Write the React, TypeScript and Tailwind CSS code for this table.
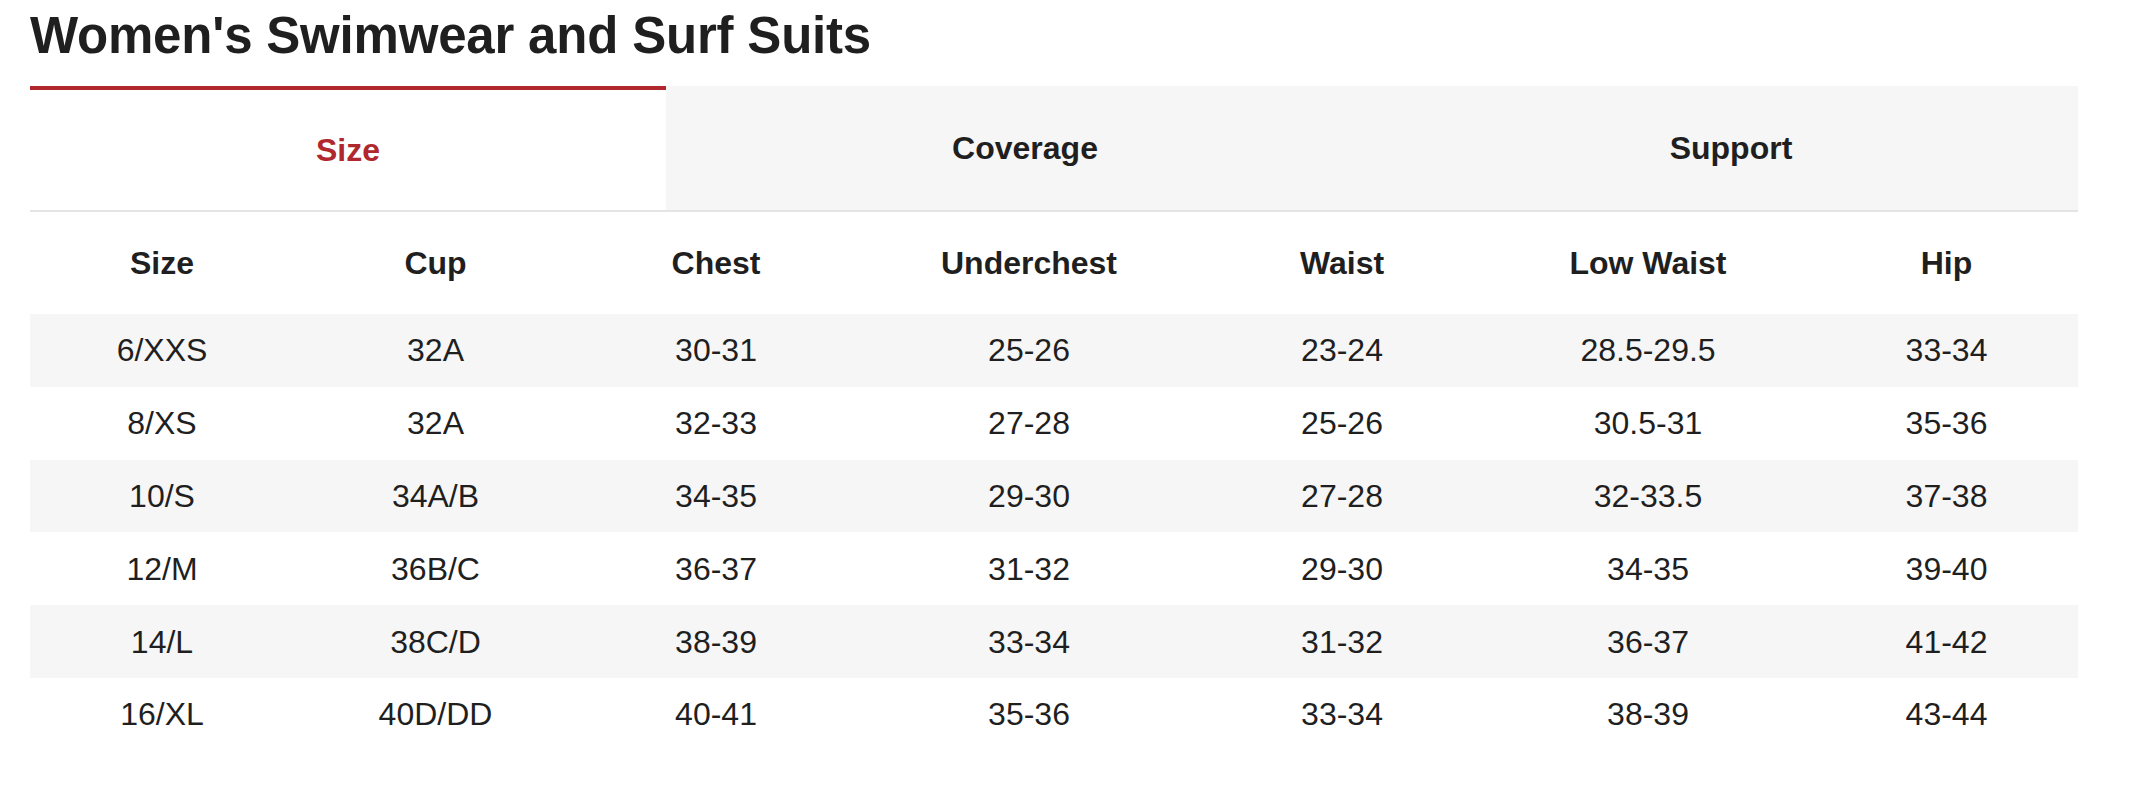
const tabs = [
  { label: "Size", width: "w-[636px]", active: true },
  { label: "Coverage", width: "w-[718px]", active: false },
  { label: "Support", width: "w-[694px]", active: false },
];

const columns = ["Size", "Cup", "Chest", "Underchest", "Waist", "Low Waist", "Hip"];

const rows = [
  ["6/XXS", "32A", "30-31", "25-26", "23-24", "28.5-29.5", "33-34"],
  ["8/XS", "32A", "32-33", "27-28", "25-26", "30.5-31", "35-36"],
  ["10/S", "34A/B", "34-35", "29-30", "27-28", "32-33.5", "37-38"],
  ["12/M", "36B/C", "36-37", "31-32", "29-30", "34-35", "39-40"],
  ["14/L", "38C/D", "38-39", "33-34", "31-32", "36-37", "41-42"],
  ["16/XL", "40D/DD", "40-41", "35-36", "33-34", "38-39", "43-44"],
];

const gridCols = "grid grid-cols-[264px_283px_278px_348px_278px_334px_263px]";

export default function App() {
  return (
    <div className="min-h-[796px] w-[2154px] bg-white font-['Liberation_Sans',Arial,sans-serif] text-[#1f1f1f]">
      <div className="ml-[30px] w-[2048px] pt-[10px]">
        <h1 className="text-[51px] font-bold leading-none tracking-[-0.2px]">
          Women's Swimwear and Surf Suits
        </h1>

        {/* Tabs */}
        <div className="mt-[25px] flex border-b-2 border-[#e4e4e4]">
          {tabs.map((tab) => (
            <div
              key={tab.label}
              className={`${tab.width} flex h-[124px] items-center justify-center text-[32px] font-bold ${
                tab.active
                  ? "border-t-4 border-[#b0282d] bg-white text-[#b0282d]"
                  : "bg-[#f6f6f6] text-[#1f1f1f]"
              }`}
            >
              {tab.label}
            </div>
          ))}
        </div>

        {/* Column headers */}
        <div className={`${gridCols} h-[102px] items-center text-center text-[32px] font-bold`}>
          {columns.map((c) => (
            <div key={c}>{c}</div>
          ))}
        </div>

        {/* Rows */}
        {rows.map((row, i) => (
          <div
            key={row[0]}
            className={`${gridCols} h-[72.8px] items-center text-center text-[32px] ${
              i % 2 === 0 ? "bg-[#f6f6f6]" : "bg-white"
            }`}
          >
            {row.map((cell, j) => (
              <div key={j}>{cell}</div>
            ))}
          </div>
        ))}
      </div>
    </div>
  );
}
